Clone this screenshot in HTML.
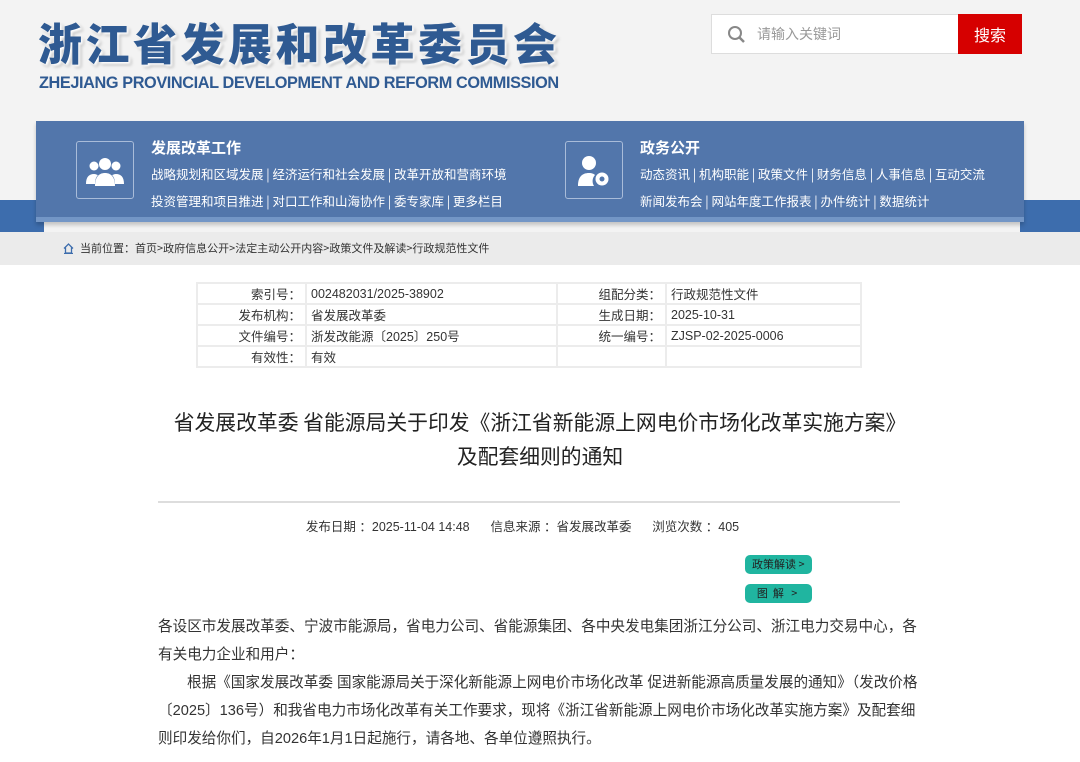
<!DOCTYPE html>
<html><head><meta charset="utf-8"><style>
*{margin:0;padding:0;box-sizing:border-box}
body{width:1080px;height:762px;overflow:hidden;background:#fff;font-family:"Liberation Sans","Microsoft YaHei","Noto Sans CJK SC",sans-serif;color:#333;position:relative}
.abs{position:absolute}
.hdr{left:0;top:0;width:1080px;height:232px;background:#f3f3f3}
.band{top:200px;height:32px;background:#3d6dad}
.logo{left:38px;top:9px;font-family:"Noto Sans CJK SC",sans-serif;font-weight:900;font-size:44px;color:#2f5a92;letter-spacing:3.5px;text-shadow:2px 2px 2px #fff,3px 3px 3px rgba(0,0,0,.25);white-space:nowrap}
.en{left:39px;top:74px;font-weight:bold;font-size:16.3px;color:#2f5a92;white-space:nowrap;letter-spacing:-.4px}
.search{left:711px;top:14px;width:248px;height:40px;background:#fff;border:1px solid #ddd}
.sbtn{left:958px;top:14px;width:64px;height:40px;background:#d60000;color:#fff;font-size:16px;text-align:center;line-height:40px;font-family:"Noto Sans CJK SC",sans-serif}
.nav{left:36px;top:121px;width:988px;height:101px;background:#5276ab;border-bottom:5px solid #7396c6;box-shadow:0 3px 4px rgba(0,0,0,.2)}
.ibox{width:58px;height:58px;border:1px solid #a9bcd9;border-radius:3px}
.nt{color:#fff;font-size:15px;font-weight:bold;font-family:"Noto Sans CJK SC",sans-serif;white-space:nowrap}
.nl{color:#fff;font-size:12.5px;font-family:"Noto Sans CJK SC",sans-serif;white-space:nowrap}
.crumb{left:0;top:232px;width:1080px;height:33px;background:#ebebeb;font-size:11px;font-family:"Noto Sans CJK SC",sans-serif;color:#333;line-height:33px;padding-left:80px}
table{position:absolute;left:196px;top:282px;width:666px;border-collapse:collapse;font-size:12.5px;font-family:"Liberation Sans","Noto Sans CJK SC",sans-serif}
td{border:2px solid #ececec;height:20.5px;padding:0 4px;white-space:nowrap;color:#333}
td.k{text-align:right;width:109px}
.title{left:0;width:1080px;text-align:center;font-size:20.8px;font-family:"Noto Sans CJK SC",sans-serif;color:#222;white-space:nowrap}
.rule{left:158px;top:501px;width:742px;height:2px;background:#ddd}
.meta{left:0;width:1045px;top:516px;text-align:center;font-size:12.5px;font-family:"Liberation Sans","Noto Sans CJK SC",sans-serif;color:#333;white-space:pre}
.btn{left:745px;width:67px;height:19px;background:#20b5a0;border-radius:5px;font-size:11px;color:#222;font-family:"Noto Sans CJK SC",sans-serif;line-height:19px;padding-left:7px;white-space:pre}
.p{left:158px;font-size:14.6px;font-family:"Liberation Sans","Noto Sans CJK SC",sans-serif;color:#333;white-space:nowrap;line-height:20px}
</style></head><body>
<div class="abs hdr"></div>
<div class="abs band" style="left:0;width:44px"></div>
<div class="abs band" style="left:1020px;width:60px"></div>
<div class="abs logo">浙江省发展和改革委员会</div>
<div class="abs en">ZHEJIANG PROVINCIAL DEVELOPMENT AND REFORM COMMISSION</div>
<div class="abs search"></div>
<svg class="abs" style="left:727px;top:25px" width="20" height="20" viewBox="0 0 20 20"><circle cx="8" cy="8" r="6" fill="none" stroke="#888" stroke-width="2"/><path d="M12.5 12.5L17 17" stroke="#888" stroke-width="2.5"/></svg>
<div class="abs" style="left:757px;top:24px;font-size:14px;color:#999;font-family:'Noto Sans CJK SC',sans-serif">请输入关键词</div>
<div class="abs sbtn">搜索</div>
<div class="abs nav"></div>
<div class="abs ibox" style="left:76px;top:141px"></div>
<svg class="abs" style="left:85px;top:156px" width="40" height="30" viewBox="0 0 40 30"><g fill="#fff"><circle cx="20" cy="8" r="6"/><path d="M10 30c0-9 4-13 10-13s10 4 10 13z"/><circle cx="9" cy="10" r="4.5"/><path d="M1 28c0-7 3-10 8-10 2 0 3 1 4 1-2 2-3 5-3 9z"/><circle cx="31" cy="10" r="4.5"/><path d="M39 28c0-7-3-10-8-10-2 0-3 1-4 1 2 2 3 5 3 9z"/></g></svg>
<div class="abs nt" style="left:151px;top:137px">发展改革工作</div>
<div class="abs nl" style="left:151px;top:164px">战略规划和区域发展 | 经济运行和社会发展 | 改革开放和营商环境</div>
<div class="abs nl" style="left:151px;top:191px">投资管理和项目推进 | 对口工作和山海协作 | 委专家库 | 更多栏目</div>
<div class="abs ibox" style="left:565px;top:141px"></div>
<svg class="abs" style="left:576px;top:154px" width="36" height="34" viewBox="0 0 36 34"><g fill="#fff"><circle cx="13" cy="9" r="7"/><path d="M2 32c0-9 4-13 11-13 3 0 5 1 6 2-3 3-3 8-1 11z"/><circle cx="26" cy="25" r="6.5"/></g><circle cx="26" cy="25" r="2.5" fill="#5276ab"/></svg>
<div class="abs nt" style="left:640px;top:137px">政务公开</div>
<div class="abs nl" style="left:640px;top:164px">动态资讯 | 机构职能 | 政策文件 | 财务信息 | 人事信息 | 互动交流</div>
<div class="abs nl" style="left:640px;top:191px">新闻发布会 | 网站年度工作报表 | 办件统计 | 数据统计</div>
<div class="abs crumb">当前位置：首页&gt;政府信息公开&gt;法定主动公开内容&gt;政策文件及解读&gt;行政规范性文件</div>
<svg class="abs" style="left:63px;top:243px" width="11" height="11" viewBox="0 0 11 11"><path d="M1 5.5L5.5 1 10 5.5M2.5 4.5V10h6V4.5M1 10.5h9" fill="none" stroke="#3d6dad" stroke-width="1.3"/></svg>
<table>
<tr><td class="k">索引号：</td><td style="width:251px">002482031/2025-38902</td><td class="k">组配分类：</td><td>行政规范性文件</td></tr>
<tr><td class="k">发布机构：</td><td>省发展改革委</td><td class="k">生成日期：</td><td>2025-10-31</td></tr>
<tr><td class="k">文件编号：</td><td>浙发改能源〔2025〕250号</td><td class="k">统一编号：</td><td>ZJSP-02-2025-0006</td></tr>
<tr><td class="k">有效性：</td><td>有效</td><td class="k"></td><td></td></tr>
</table>
<div class="abs title" style="top:406px">省发展改革委 省能源局关于印发《浙江省新能源上网电价市场化改革实施方案》</div>
<div class="abs title" style="top:440px">及配套细则的通知</div>
<div class="abs rule"></div>
<div class="abs meta">发布日期 ：2025-11-04 14:48      信息来源 ：省发展改革委      浏览次数 ：405</div>
<div class="abs btn" style="top:555px">政策解读 &gt;</div>
<div class="abs btn" style="top:584px">  图  解   &gt;</div>
<div class="abs p" style="top:617px">各设区市发展改革委、宁波市能源局，省电力公司、省能源集团、各中央发电集团浙江分公司、浙江电力交易中心，各</div>
<div class="abs p" style="top:645px">有关电力企业和用户：</div>
<div class="abs p" style="top:673px;left:187px">根据《国家发展改革委 国家能源局关于深化新能源上网电价市场化改革 促进新能源高质量发展的通知》（发改价格</div>
<div class="abs p" style="top:701px">〔2025〕136号）和我省电力市场化改革有关工作要求，现将《浙江省新能源上网电价市场化改革实施方案》及配套细</div>
<div class="abs p" style="top:729px">则印发给你们，自2026年1月1日起施行，请各地、各单位遵照执行。</div>
</body></html>
